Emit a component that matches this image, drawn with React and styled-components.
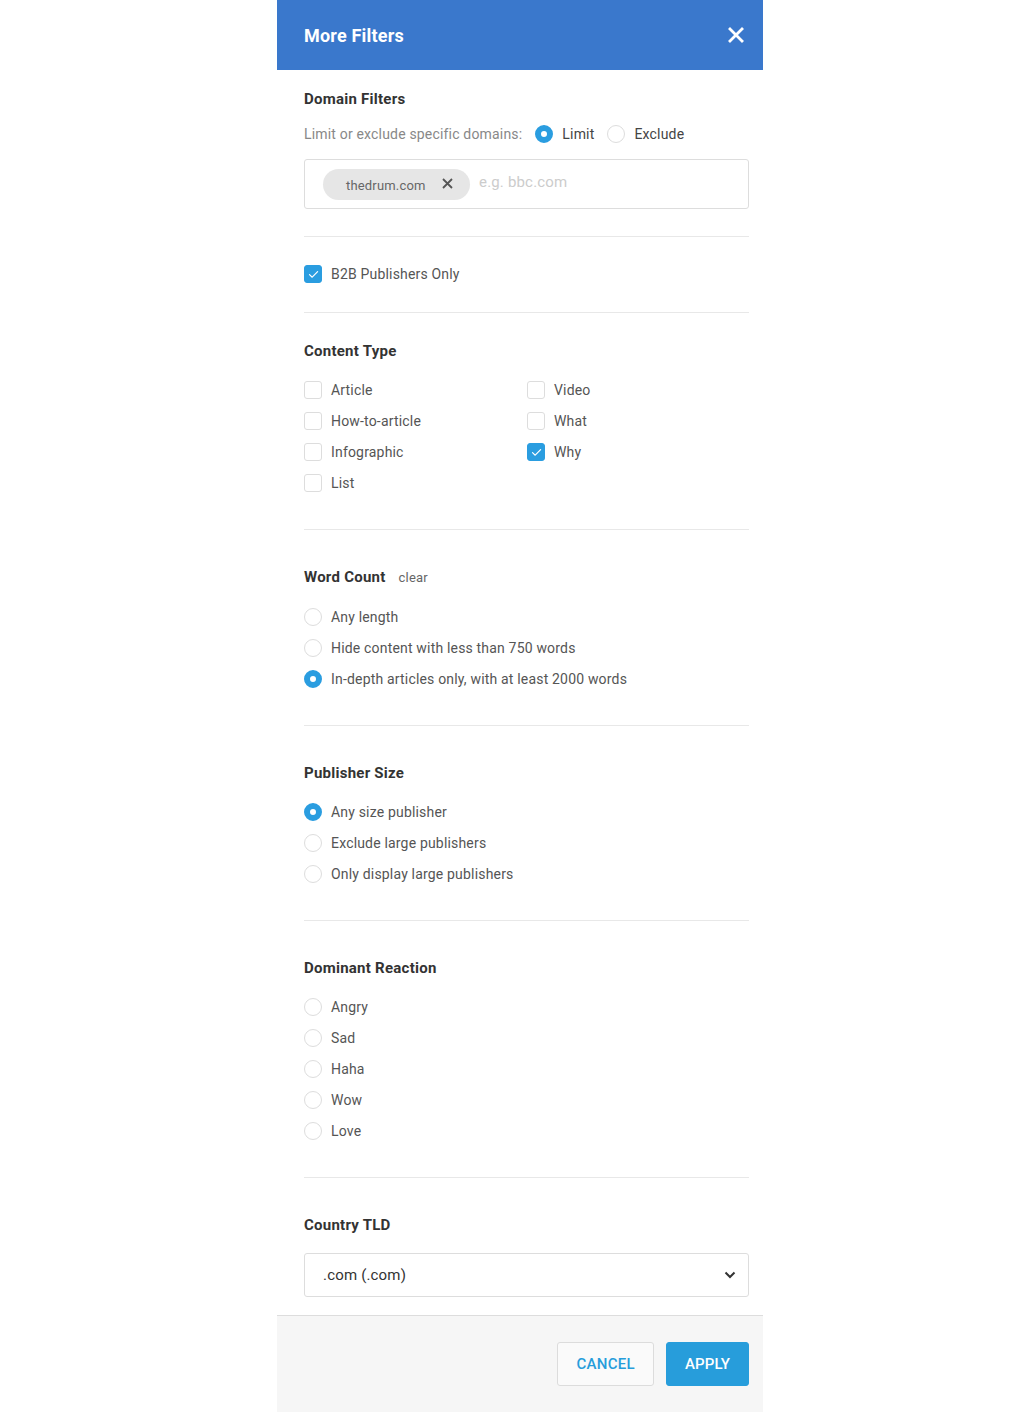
import React from 'react'
import styled, { createGlobalStyle } from 'styled-components'

const GlobalStyle = createGlobalStyle`
    body {
        margin: 0;
        background: #fff;
        font-family: Roboto, "Liberation Sans", Arial, sans-serif;
        color: #444;
        letter-spacing: 0.18px;
    }
`

const Panel = styled.div`
    width: 486px;
    margin-left: 277px;
    background: #fff;
    display: flex;
    flex-direction: column;
`

const Header = styled.div`
    height: 70px;
    background: #3a78cc;
    display: flex;
    align-items: center;
    justify-content: space-between;
    padding: 0 17px 0 27px;
    box-sizing: border-box;
    color: #fff;
    font-size: 18px;
    font-weight: 700;
    letter-spacing: 0.2px;
`

const CloseButton = styled.button`
    border: 0;
    background: none;
    padding: 0;
    width: 20px;
    height: 20px;
    display: flex;
    align-items: center;
    justify-content: center;
    cursor: pointer;
`

const Section = styled.section`
    margin: 0 14px 0 27px;
    padding: ${p => p.$top}px 0 ${p => p.$bottom}px;
    border-bottom: ${p => (p.$last ? 'none' : '1px solid #e8e8e8')};
    display: flex;
    flex-direction: column;
`

const Title = styled.h3`
    margin: 0;
    padding-top: 1px;
    font-size: 15px;
    line-height: 20px;
    font-weight: 700;
    letter-spacing: 0.25px;
    color: #333;
    display: flex;
    align-items: baseline;
    gap: 13px;
`

const ClearLink = styled.span`
    font-size: 13px;
    font-weight: 400;
    letter-spacing: 0.18px;
    color: #666;
`

const InlineRow = styled.div`
    margin-top: 15px;
    display: flex;
    align-items: center;
    height: 20px;
    font-size: 14px;
    color: #888;
    gap: 13px;
`

const Options = styled.div`
    margin-top: ${p => p.$top ?? 19}px;
    display: grid;
    grid-template-columns: ${p => (p.$cols === 2 ? '223px 1fr' : '1fr')};
    grid-auto-flow: ${p => (p.$cols === 2 ? 'column' : 'row')};
    grid-template-rows: ${p => (p.$rows ? `repeat(${p.$rows}, 20px)` : 'none')};
    row-gap: 11px;
`

const Option = styled.label`
    display: flex;
    align-items: center;
    gap: 9px;
    height: 20px;
    font-size: 14px;
    color: ${p => p.$color || '#555'};
`

const RadioDot = styled.span`
    width: 18px;
    height: 18px;
    box-sizing: border-box;
    border-radius: 50%;
    border: ${p => (p.$on ? '6px solid #2a9de0' : '1px solid #ddd')};
    background: #fff;
    flex-shrink: 0;
`

const Box = styled.span`
    width: 18px;
    height: 18px;
    box-sizing: border-box;
    border-radius: 3px;
    border: 1px solid ${p => (p.$on ? '#2a9de0' : '#ddd')};
    background: ${p => (p.$on ? '#2a9de0' : '#fff')};
    display: flex;
    align-items: center;
    justify-content: center;
    flex-shrink: 0;
`

const TagInput = styled.div`
    margin-top: 15px;
    height: 50px;
    box-sizing: border-box;
    border: 1px solid #ddd;
    border-radius: 3px;
    display: flex;
    align-items: center;
    padding: 0 18px;
    gap: 9px;
`

const Chip = styled.span`
    height: 31px;
    width: 147px;
    box-sizing: border-box;
    border-radius: 16px;
    background: #e6e6e6;
    display: flex;
    align-items: center;
    justify-content: space-between;
    padding: 2px 17px 0 23px;
    font-size: 13px;
    color: #666;
`

const Placeholder = styled.span`
    font-size: 15px;
    color: #ccc;
    margin-top: -4px;
`

const Select = styled.div`
    margin-top: 18px;
    height: 44px;
    box-sizing: border-box;
    border: 1px solid #ddd;
    border-radius: 3px;
    display: flex;
    align-items: center;
    justify-content: space-between;
    padding: 0 12px 0 18px;
    font-size: 15px;
    color: #333;
`

const Footer = styled.div`
    height: 97px;
    box-sizing: border-box;
    border-top: 1px solid #ddd;
    background: #f6f6f6;
    display: flex;
    justify-content: flex-end;
    align-items: flex-start;
    gap: 12px;
    padding: 26px 14px 0 0;
`

const Button = styled.button`
    height: 44px;
    padding: 0 18px;
    border-radius: 3px;
    border: 1px solid ${p => (p.$primary ? '#279ddb' : '#dcdcdc')};
    background: ${p => (p.$primary ? '#279ddb' : '#fafafa')};
    color: ${p => (p.$primary ? '#fff' : '#279ddb')};
    font-family: inherit;
    font-size: 15px;
    font-weight: 500;
    letter-spacing: ${p => (p.$primary ? 0.1 : 0.3)}px;
    text-transform: uppercase;
    cursor: pointer;
`

const Check = () => (
    <svg width="11" height="9" viewBox="0 0 11 9" fill="none">
        <path d="M1.5 4.6 L4.2 7.2 L9.6 1.6" stroke="#fff" strokeWidth="1.2" strokeLinecap="round" strokeLinejoin="round" />
    </svg>
)

const Radio = ({ on, label, color }) => (
    <Option $color={color}>
        <RadioDot $on={on} />
        {label}
    </Option>
)

const Checkbox = ({ on, label }) => (
    <Option>
        <Box $on={on}>{on && <Check />}</Box>
        {label}
    </Option>
)

const contentTypes = [
    ['Article', false], ['How-to-article', false], ['Infographic', false], ['List', false],
    ['Video', false], ['What', false], ['Why', true],
]

export default function App() {
    return (
        <>
            <GlobalStyle />
            <Panel>
                <Header>
                    More Filters
                    <CloseButton aria-label="close">
                        <svg width="16" height="16" viewBox="0 0 16 16">
                            <path d="M2 2 L14 14 M14 2 L2 14" stroke="#fff" strokeWidth="2.8" strokeLinecap="square" />
                        </svg>
                    </CloseButton>
                </Header>

                <Section $top={18} $bottom={27}>
                    <Title>Domain Filters</Title>
                    <InlineRow>
                        Limit or exclude specific domains:
                        <Radio on label="Limit" color="#444" />
                        <Radio label="Exclude" color="#444" />
                    </InlineRow>
                    <TagInput>
                        <Chip>
                            thedrum.com
                            <svg width="11" height="11" viewBox="0 0 11 11" style={{ marginTop: -4 }}>
                                <path d="M1 1 L10 10 M10 1 L1 10" stroke="#555" strokeWidth="1.8" />
                            </svg>
                        </Chip>
                        <Placeholder>e.g. bbc.com</Placeholder>
                    </TagInput>
                </Section>

                <Section $top={27} $bottom={28}>
                    <Checkbox on label="B2B Publishers Only" />
                </Section>

                <Section $top={27} $bottom={36}>
                    <Title>Content Type</Title>
                    <Options $cols={2} $rows={4}>
                        {contentTypes.map(([label, on]) => (
                            <Checkbox key={label} on={on} label={label} />
                        ))}
                    </Options>
                </Section>

                <Section $top={36} $bottom={36}>
                    <Title>
                        Word Count <ClearLink>clear</ClearLink>
                    </Title>
                    <Options>
                        <Radio label="Any length" />
                        <Radio label="Hide content with less than 750 words" />
                        <Radio on label="In-depth articles only, with at least 2000 words" />
                    </Options>
                </Section>

                <Section $top={36} $bottom={36}>
                    <Title>Publisher Size</Title>
                    <Options>
                        <Radio on label="Any size publisher" />
                        <Radio label="Exclude large publishers" />
                        <Radio label="Only display large publishers" />
                    </Options>
                </Section>

                <Section $top={36} $bottom={36}>
                    <Title>Dominant Reaction</Title>
                    <Options>
                        {['Angry', 'Sad', 'Haha', 'Wow', 'Love'].map(r => (
                            <Radio key={r} label={r} />
                        ))}
                    </Options>
                </Section>

                <Section $top={36} $bottom={18} $last>
                    <Title>Country TLD</Title>
                    <Select>
                        .com (.com)
                        <svg width="12" height="8" viewBox="0 0 12 8">
                            <path d="M1.5 1.5 L6 6 L10.5 1.5" stroke="#333" strokeWidth="2" fill="none" />
                        </svg>
                    </Select>
                </Section>

                <Footer>
                    <Button>Cancel</Button>
                    <Button $primary>Apply</Button>
                </Footer>
            </Panel>
        </>
    )
}
